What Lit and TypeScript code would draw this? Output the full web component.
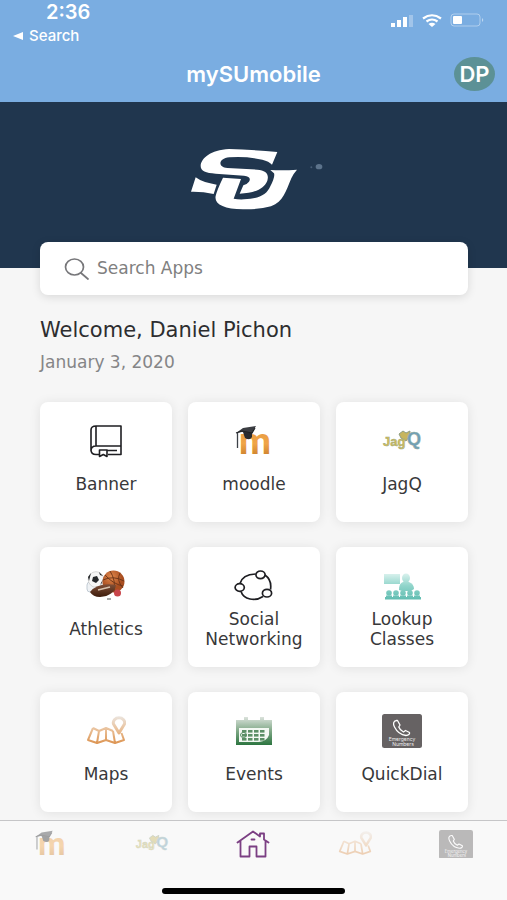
import { LitElement, html, svg, css, TemplateResult } from "lit";
import { customElement, property } from "lit/decorators.js";
import { classMap } from "lit/directives/class-map.js";

const icons: Record<string, () => TemplateResult> = {
  book: () => html`<svg width="34" height="34" viewBox="0 0 34 34" fill="none" stroke="#1e1e22" stroke-width="1.6" stroke-linejoin="round">
    <path d="M7 2H32V22H7Q2 22 2 27V6Q2 2 7 2V22M32 22V30.500H19M10 30.500H7Q2 30.500 2 26M18 26.500H28"/>
    <path d="M10.500 26H18V32.500L14.300 30.500L10.500 32.500Z"/></svg>`,
  moodle: () => html`<svg width="40" height="46" viewBox="0 -6 40 46">
    <defs><linearGradient id="mo" x1="0" y1="0" x2="0" y2="1"><stop offset="0" stop-color="#e2953f"/><stop offset=".55" stop-color="#f0a548"/><stop offset="1" stop-color="#b86d1d"/></linearGradient></defs>
    <text x="5" y="30" font-family="Roboto, sans-serif" font-weight="700" font-size="37" fill="url(#mo)">m</text>
    <path d="M9 8H18V13Q16 17 11 14Z" fill="#292b2f"/>
    <path d="M2 9L9 4L22 2L18 9L8 8Z" fill="#3b3d42"/><path d="M2 9L8 7L18 9L21 4" fill="none" stroke="#202225" stroke-width="1.200"/>
    <path d="M3.500 9V24" stroke="#3c4148" stroke-width="1.300"/></svg>`,
  jagq: () => html`<svg width="40" height="28" viewBox="0 -2 40 28">
    <path d="M17 5L21 2L24 4L28 2L27 8L24 12L19 9Z" fill="#c7b55d" stroke="#8f9e82"/>
    <g font-family="Liberation Sans, sans-serif" font-weight="700" stroke-width=".5">
    <text x="25" y="16" font-size="18" fill="#6f9fb9" stroke="#9bb09a">Q</text>
    <text x="1" y="17" font-size="13" fill="#d8bd55" stroke="#9caa80">Jag</text></g></svg>`,
  sports: () => html`<svg width="42" height="32" viewBox="0 0 42 32">
    <defs><radialGradient id="bb" cx=".4" cy=".3"><stop offset="0" stop-color="#e28a4e"/><stop offset="1" stop-color="#a94e20"/></radialGradient>
    <linearGradient id="fb" x1="0" y1="0" x2="0" y2="1"><stop offset="0" stop-color="#805038"/><stop offset="1" stop-color="#3d1c0c"/></linearGradient></defs>
    <rect x="2" y="12" width="11" height="10" rx="3" fill="#eff2f5" stroke="#c2cbd4"/>
    <circle cx="11" cy="9.500" r="7.800" fill="#f6f6f6" stroke="#c9c9c9" stroke-width=".7"/>
    <path d="M8 7L12 6L14 10L11 13L7 11ZM3 7L6 3L4 11ZM14 2L18 6L15 5ZM17 13L18 9L15 15Z" fill="#26282b"/>
    <circle cx="28.500" cy="11.500" r="11" fill="url(#bb)"/>
    <path d="M18 10Q28 5 39 11M25 1Q31 10 29 22M20 5Q28 14 38 16M35 3Q31 10 38 18" fill="none" stroke="#693317" stroke-width=".9"/>
    <circle cx="32.500" cy="23" r="3.500" fill="#c8454a"/>
    <path d="M5 22Q13 12 31 15Q29 26 15 27Q8 27 5 22Z" fill="url(#fb)"/>
    <path d="M13 20L25 17" stroke="#d9c3ae" stroke-width="1.6"/>
    <path d="M22 29H26" stroke="#545454"/></svg>`,
  social: () => html`<svg width="40" height="32" viewBox="0 0 40 32" fill="none" stroke="#1e1e22" stroke-width="1.700">
    <path d="M6 13.500Q8.500 4.500 21.500 4M31 5Q38 10 36.500 19.500M29 26.500Q23 30.500 16 29Q9 27.500 7 21.500"/>
    <ellipse cx="26.500" cy="4.800" rx="4.600" ry="3.800"/><ellipse cx="5.700" cy="17.500" rx="4.600" ry="3.800"/><ellipse cx="33" cy="23.200" rx="4.600" ry="3.800"/></svg>`,
  classes: () => html`<svg width="38" height="28" viewBox="0 0 38 28">
    <defs><linearGradient id="cl" gradientUnits="userSpaceOnUse" x1="0" y1="0" x2="0" y2="28"><stop offset="0" stop-color="#e3f5f2"/><stop offset=".5" stop-color="#8fd4ca"/><stop offset="1" stop-color="#5fbcb0"/></linearGradient></defs>
    <g fill="url(#cl)"><rect x="1" y="2" width="16" height="10"/>
    <ellipse cx="23" cy="6" rx="4" ry="4.500"/><path d="M16 18Q16 11 20 10H26Q31 12 31 17L28 19H19Z"/>
    ${[6, 13, 20, 27, 34].map((x) => svg`<circle cx=${x} cy="21" r="2.800"/><rect x=${x - 3} y="23.500" width="6" height="3"/>`)}
    <rect x="2" y="25" width="36" height="2.500"/></g></svg>`,
  map: () => html`<svg width="40" height="30" viewBox="0 0 40 30" fill="none">
    <defs><linearGradient id="mp" gradientUnits="userSpaceOnUse" x1="0" y1="0" x2="0" y2="28"><stop offset="0" stop-color="#ebe5df"/><stop offset=".5" stop-color="#e9bf97"/><stop offset="1" stop-color="#dc9350"/></linearGradient></defs>
    <g stroke="url(#mp)" stroke-width="2" stroke-linejoin="round">
    <path d="M7 12L2 24L11 27L20 24L29 27L38 24L35.500 17M7 12L13 15L20 12L27 15M13 15L11 27M20 12V24M27 15L29 27"/>
    <path d="M33 17L27.500 8A5.700 5 0 1 1 38.500 8Z" stroke-width="3"/></g></svg>`,
  calendar: () => html`<svg width="38" height="30" viewBox="0 0 38 30">
    <defs><linearGradient id="ca" x1="0" y1="0" x2="0" y2="1"><stop offset="0" stop-color="#dbe2dc"/><stop offset=".5" stop-color="#7fa886"/><stop offset="1" stop-color="#2c7540"/></linearGradient></defs>
    <path d="M1 4H9V1H13V4H25V1H29V4H37V29H1Z" fill="url(#ca)"/>
    <path d="M4 12H34V19Q32 25 24 26H4Z" fill="#f3f8f3"/>
    <g fill="#5b8f66">${[14, 18, 22].map((y) => [7, 13, 19, 25].map((x) => svg`<rect x=${x} y=${y} width="4.500" height="2.600"/>`))}</g>
    <ellipse cx="8.500" cy="19" rx="3" ry="2.500" fill="none" stroke="#4f8a5d"/></svg>`,
  dial: () => html`<svg width="40" height="34" viewBox="0 0 40 34">
    <rect width="40" height="34" rx="2.500" fill="#666263"/>
    <path d="M14.500 6.500C11 7 11 10 12.500 13C15 18 19 21 24 21.500C26.500 21.500 28 20 27.500 18.500L23.500 16.500L21.500 18C19.500 17 17.500 15 16.800 13L18 11L15.500 6.500Z" fill="none" stroke="#fff" stroke-width="1.300" stroke-linejoin="round"/>
    <g fill="#eee" font-family="Inter, sans-serif" font-size="5" text-anchor="middle"><text x="20" y="27">Emergency</text><text x="21" y="32">Numbers</text></g></svg>`,
  home: () => html`<svg width="34" height="28" viewBox="0 0 34 28" fill="none" stroke="#7b3f83" stroke-width="1.800" stroke-linejoin="round" stroke-linecap="round">
    <path d="M1.500 12.500L17 1.500L24 6.500V3.500H28V9.500L32.500 12.500M4.500 11V26.500H13.500V16.500H20.500V26.500H29.500V11M15.500 9.500H18.500"/></svg>`,
};

@customElement("status-bar")
class StatusBar extends LitElement {
  static styles = css`
    :host { display: flex; justify-content: space-between; height: 46px; color: #fff; }
    .left { padding-left: 13px; }
    .time { padding-left: 33px; font-size: 20px; line-height: 25px; font-weight: 600; }
    .back { display: flex; align-items: center; gap: 6px; font-size: 15px; line-height: 22px; font-weight: 500; color: inherit; text-decoration: none; }
    .signals { display: flex; align-items: center; gap: 8px; height: 40px; padding-right: 23px; }
  `;
  render() {
    return html`
      <div class="left">
        <div class="time">2:36</div>
        <a class="back" href="#search"><svg width="10" height="8" viewBox="0 0 10 8"><path d="M10 0V8L0 4Z" fill="#fff"/></svg>Search</a>
      </div>
      <div class="signals">
        <svg width="24" height="13" viewBox="0 0 24 13" fill="#fff"><rect x="1" y="9" width="4" height="4"/><rect x="7" y="6" width="4" height="7"/><rect x="13" y="3" width="4" height="10"/><rect x="19" y="1" width="4" height="12" opacity=".3"/></svg>
        <svg width="20" height="13" viewBox="0 0 20 13" fill="none" stroke="#fff" stroke-width="2.200"><path d="M1 4.500Q10-2 19 4.500M4.500 7.500Q10 3.500 15.500 7.500"/><path d="M6.500 10Q10 7.500 13.500 10L10 13Z" fill="#fff" stroke="none"/></svg>
        <svg width="34" height="14" viewBox="0 0 34 14"><rect x="1" y="1" width="29" height="12" rx="3" fill="none" stroke="#fff" opacity=".4"/><rect x="3" y="3" width="9" height="8" rx="1" fill="#fff"/><path d="M32 5Q34.500 7 32 9Z" fill="#fff" opacity=".5"/></svg>
      </div>`;
  }
}

@customElement("app-tile")
class AppTile extends LitElement {
  @property() icon = "";
  @property() label = "";
  static styles = css`
    .tile { box-sizing: border-box; height: 120px; padding: 20px 12px 14px; display: flex; flex-direction: column; align-items: center; border-radius: 8px; background: #fff; box-shadow: 0 1px 12px rgba(0, 0, 0, 0.09); color: #38383a; text-decoration: none; }
    .icon { display: flex; align-items: center; height: 38px; }
    .label { flex: 1; display: flex; align-items: center; text-align: center; font-size: 17px; line-height: 20px; }
  `;
  render() {
    return html`<a class="tile" href="#${this.icon}"><span class="icon">${icons[this.icon]()}</span><span class="label">${this.label}</span></a>`;
  }
}

@customElement("tab-bar")
class TabBar extends LitElement {
  static styles = css`
    :host { display: block; height: 80px; box-sizing: border-box; border-top: 1px solid #c6c6c8; background: #f9f9f9; }
    .tabs { display: grid; grid-template-columns: repeat(5, 1fr); height: 46px; }
    .tab { display: flex; align-items: center; justify-content: center; }
    .tab svg { width: 34px; height: auto; }
    .dim { opacity: 0.42; }
    .indicator { width: 36%; height: 6px; margin: 21px auto 0; border-radius: 3px; background: #000; }
  `;
  render() {
    const tabs = [["moodle", "Moodle"], ["jagq", "JagQ"], ["home", "Home"], ["map", "Maps"], ["dial", "QuickDial"]];
    return html`
      <nav class="tabs">
        ${tabs.map(([id, name]) => html`<a class=${classMap({ tab: true, dim: id !== "home" })} href="#${id}" aria-label=${name}>${icons[id]()}</a>`)}
      </nav>
      <div class="indicator"></div>`;
  }
}

@customElement("app-root")
class AppRoot extends LitElement {
  static styles = css`
    :host { display: flex; flex-direction: column; height: 100vh; background: #f6f6f6; font-family: "DejaVu Sans", sans-serif; color: #2d2d2f; }
    .top { background: #7aade1; flex: none; font-family: Inter, sans-serif; }
    .titlebar { display: grid; grid-template-columns: 1fr auto 1fr; align-items: center; height: 56px; padding: 0 12px; color: #fff; }
    .title { grid-column: 2; margin: 0; font-size: 22px; line-height: 24px; font-weight: 600; }
    .avatar { justify-self: end; width: 41px; height: 34px; padding: 0; border: 0; border-radius: 50%; background: #5c9196; color: #fff; font: 600 22px/34px Inter, sans-serif; display: flex; justify-content: center; }
    .scroll { flex: 1; min-height: 0; overflow: hidden; }
    .hero { height: 166px; background: #20364e; display: flex; justify-content: center; }
    .logo { width: 170px; height: 90px; margin-top: 28px; }
    .content { padding: 0 39px 8px 40px; }
    .search { position: relative; display: flex; align-items: center; gap: 7px; height: 53px; margin-top: -26px; padding: 0 24px; border-radius: 8px; background: #fff; box-shadow: 0 2px 10px rgba(0, 0, 0, 0.12); }
    .field { flex: 1; min-width: 0; border: 0; padding: 0 0 2px; outline: 0; background: none; font: 17px/24px "DejaVu Sans", sans-serif; color: #444; }
    .field::placeholder { color: #808080; opacity: 1; }
    .welcome { margin: 21px 0 0; font-size: 21px; line-height: 28px; font-weight: 400; }
    .date { margin: 6px 0 0; font-size: 17px; line-height: 24px; color: #858587; }
    .grid { display: grid; grid-template-columns: repeat(3, 1fr); gap: 25px 16px; margin-top: 28px; }
    tab-bar { flex: none; }
  `;
  render() {
    const apps = [["book", "Banner"], ["moodle", "moodle"], ["jagq", "JagQ"], ["sports", "Athletics"], ["social", "Social Networking"], ["classes", "Lookup Classes"], ["map", "Maps"], ["calendar", "Events"], ["dial", "QuickDial"]];
    return html`
      <header class="top">
        <status-bar></status-bar>
        <div class="titlebar">
          <h1 class="title">mySUmobile</h1>
          <button class="avatar">DP</button>
        </div>
      </header>
      <main class="scroll">
        <div class="hero">
          <svg class="logo" viewBox="0 0 510 270" role="img" aria-label="SU">
            <g fill="#fff">
              <path d="M325 66Q250 59 180 57C125 60 96 85 95 108C95 124 110 129 140 131L225 137C241 138 246 146 240 155Q234 163 223 166L212 191C255 190 286 176 295 152C301 131 290 121 265 119L175 114C145 112 148 85 181 82Q230 78 280 89Q300 94 309 104Z"/>
              <path d="M80 142Q101 158 143 164L134 192Q100 184 66 185Z"/>
              <path d="M162 143L216 147L194 206Q208 209 225 208C270 206 293 195 304 169Q319 139 315 130L304 120Q345 122 384 119Q373 131 367 145C350 184 344 215 306 229Q270 239 222 238C164 237 135 222 140 198Q144 180 162 143Z"/>
            </g>
            <ellipse cx="450" cy="110" rx="10" ry="8" fill="#5c738b"/><circle cx="427" cy="112" r="3" fill="#465d76"/>
          </svg>
        </div>
        <div class="content">
          <label class="search">
            <svg width="26" height="22" viewBox="0 0 26 22" fill="none" stroke="#77777a" stroke-width="1.700" stroke-linecap="round"><ellipse cx="10.500" cy="9" rx="9" ry="8"/><path d="M17 15L24 21"/></svg>
            <input class="field" type="text" placeholder="Search Apps" aria-label="Search Apps">
          </label>
          <h2 class="welcome">Welcome, Daniel Pichon</h2>
          <p class="date">January 3, 2020</p>
          <div class="grid">${apps.map(([icon, label]) => html`<app-tile icon=${icon} label=${label}></app-tile>`)}</div>
        </div>
      </main>
      <tab-bar></tab-bar>`;
  }
}
